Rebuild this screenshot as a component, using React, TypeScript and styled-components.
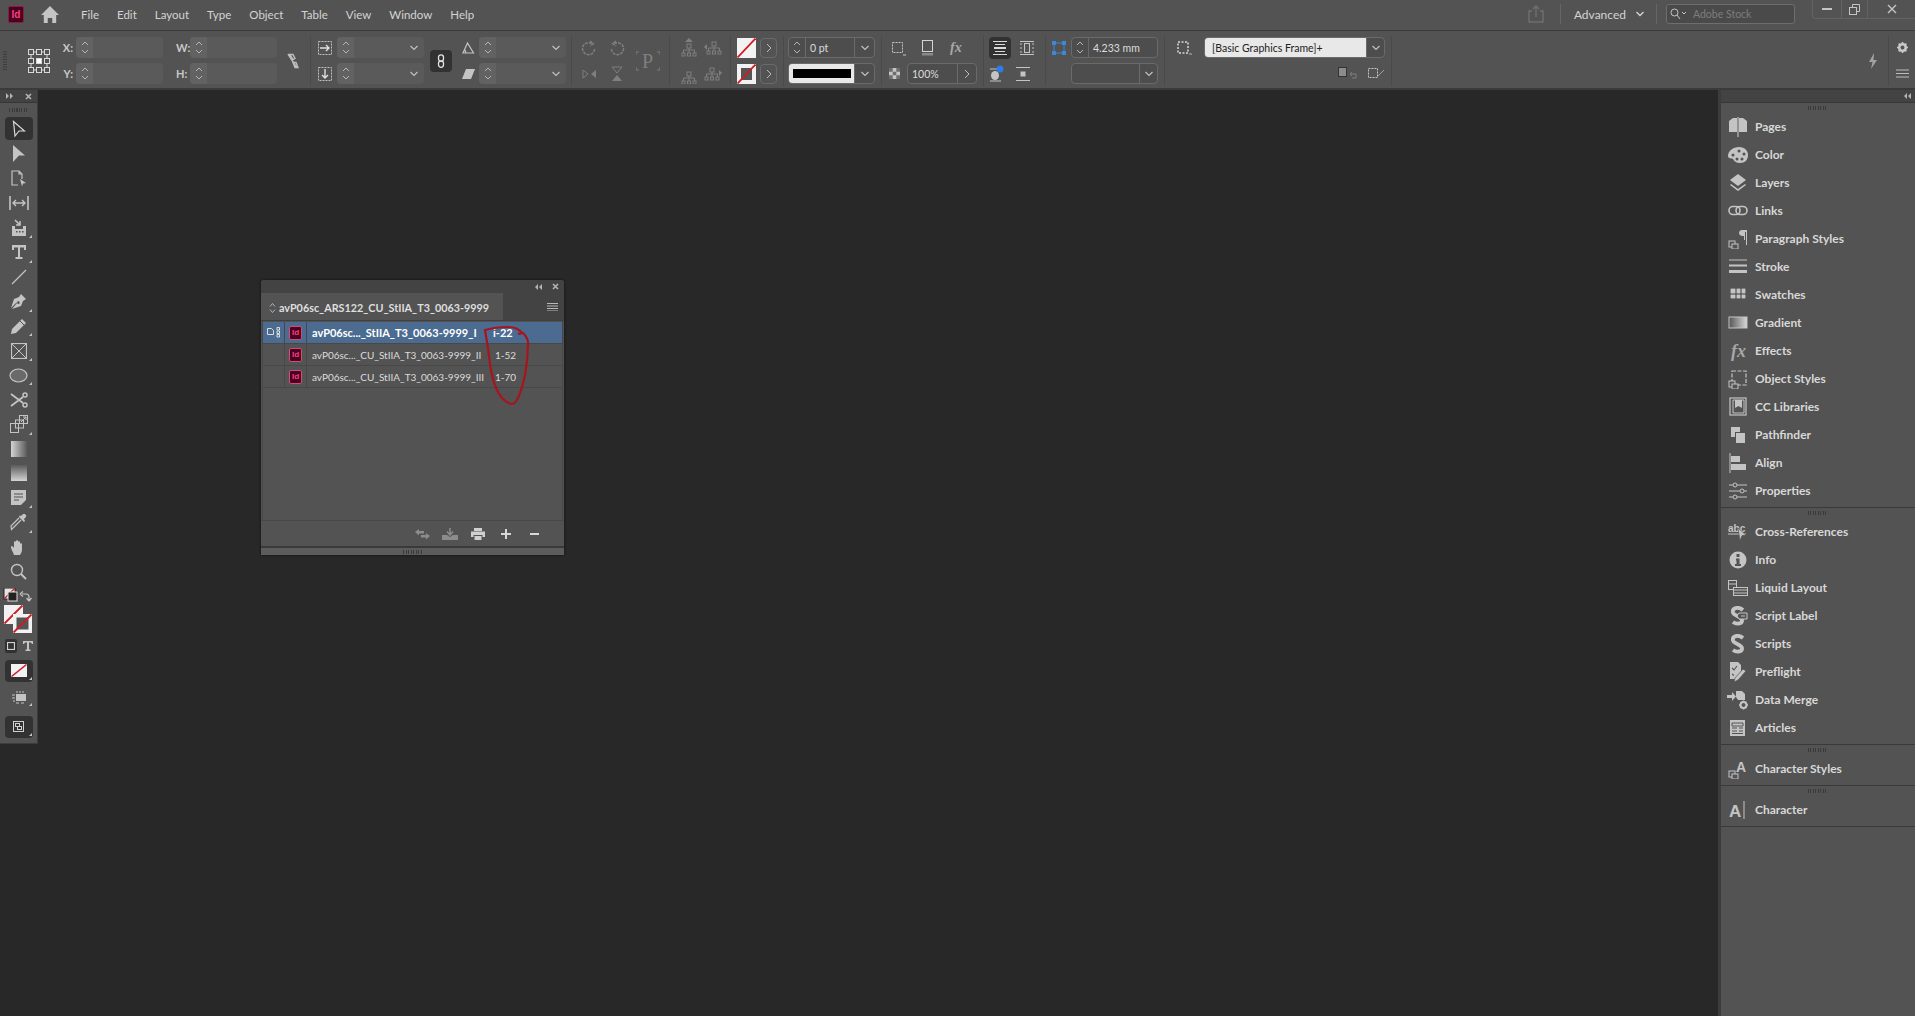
import React from "react";
import styled, { createGlobalStyle } from "styled-components";

const FONT = `"Lato", "Noto Sans", "Liberation Sans", sans-serif`;
const ICON = "#c4c4c4";
const DIM = "#7f7f7f";

const Global = createGlobalStyle`
  html, body { margin: 0; padding: 0; height: 100%; background: #282828; overflow: hidden; }
  #root { height: 100%; }
  * { box-sizing: border-box; }
`;

const Page = styled.div`
  display: flex;
  flex-direction: column;
  width: 1915px;
  height: 1016px;
  font-family: ${FONT};
  background: #282828;
  color: #d2d2d2;
`;

/* ---------- shared icon helper ---------- */
const Svg = styled.svg`
  display: block;
  flex: none;
`;

type GProps = { w?: number; h?: number; vb?: string; c?: string; children: React.ReactNode };
const G = ({ w = 20, h = 20, vb, c = ICON, children }: GProps) => (
  <Svg width={w} height={h} viewBox={vb || `0 0 ${w} ${h}`} fill={c} stroke="none">
    {children}
  </Svg>
);
const ln = (c: string, sw = 1) => ({ stroke: c, strokeWidth: sw, fill: "none" });

/* ---------- menu bar ---------- */
const MenuBar = styled.div`
  display: flex;
  align-items: center;
  height: 31px;
  flex: none;
  background: #535353;
  border-bottom: 1px solid #3c3c3c;
  padding: 0 0 2px 8px;
`;

const AppLogo = styled.div<{ $small?: boolean }>`
  width: ${(p) => (p.$small ? 13 : 16)}px;
  height: ${(p) => (p.$small ? 14 : 17)}px;
  flex: none;
  border-radius: 2px;
  background: #49021f;
  border: 1px solid ${(p) => (p.$small ? "#d9487a" : "#8a1d47")};
  color: #ff3f7f;
  font: 700 ${(p) => (p.$small ? 8 : 10)}px "Liberation Sans", sans-serif;
  display: flex;
  align-items: center;
  justify-content: center;
`;

const HomeSlot = styled.div`
  margin: 0 22px 0 17px;
`;

const Menu = styled.nav`
  display: flex;
  gap: 18px;
  font-size: 11.5px;
  color: #d4d4d4;
`;

const MenuRight = styled.div`
  margin-left: auto;
  display: flex;
  align-items: center;
  height: 100%;
`;

const VSep = styled.div<{ $m: string; $h?: number }>`
  width: 1px;
  height: ${(p) => p.$h ?? 20}px;
  background: #666;
  margin: ${(p) => p.$m};
`;

const Workspace = styled.span`
  font-size: 12px;
  color: #d4d4d4;
  margin-right: 9px;
`;

const StockSearch = styled.div`
  display: flex;
  align-items: center;
  gap: 6px;
  width: 129px;
  height: 20px;
  margin-right: 17px;
  padding-left: 3px;
  background: #4a4a4a;
  border: 1px solid #6e6e6e;
  border-radius: 3px;
  font-size: 10.5px;
  color: #7d7d7d;
`;

const WinButtons = styled.div`
  display: flex;
  align-self: flex-start;
  height: 19px;
  border: 1px solid #636363;
  border-top: 0;
  border-right: 0;
  border-radius: 0 0 0 4px;
`;

const WinButton = styled.div<{ $w: number; $line?: boolean }>`
  width: ${(p) => p.$w}px;
  display: flex;
  align-items: center;
  justify-content: center;
  border-right: ${(p) => (p.$line ? "1px solid #636363" : "0")};
`;

/* ---------- control bar ---------- */
const ControlBar = styled.div`
  display: flex;
  align-items: center;
  height: 59px;
  flex: none;
  padding-top: 2px;
  background: #535353;
  border-bottom: 2px solid #3a3a3a;
`;

const Group = styled.div<{ $w: number; $pad?: number; $gap?: number; $noLine?: boolean }>`
  display: flex;
  align-items: center;
  flex: none;
  width: ${(p) => p.$w}px;
  height: 50px;
  padding-left: ${(p) => p.$pad ?? 0}px;
  gap: ${(p) => p.$gap ?? 0}px;
  border-right: ${(p) => (p.$noLine ? "0" : "1px solid #4a4a4a")};
`;

const Col = styled.div<{ $w?: number }>`
  display: flex;
  flex-direction: column;
  gap: 5px;
  flex: none;
  ${(p) => (p.$w !== undefined ? `width: ${p.$w}px;` : "")}
`;

const Row = styled.div<{ $gap?: number; $end?: boolean; $center?: boolean }>`
  display: flex;
  align-items: center;
  height: 21px;
  gap: ${(p) => p.$gap ?? 0}px;
  justify-content: ${(p) => (p.$end ? "flex-end" : p.$center ? "center" : "flex-start")};
`;

const AxisLabel = styled.span<{ $w: number }>`
  width: ${(p) => p.$w}px;
  flex: none;
  font-size: 11px;
  font-weight: 700;
  color: #c8c8c8;
  text-align: right;
  padding-right: 3px;
`;

const Field = styled.div<{ $w: number; $outlined?: boolean }>`
  display: flex;
  align-items: center;
  flex: none;
  width: ${(p) => p.$w}px;
  height: 21px;
  border-radius: 4px;
  font-size: 10.5px;
  color: #dcdcdc;
  background: ${(p) => (p.$outlined ? "#4d4d4d" : "#5a5a5a")};
  border: ${(p) => (p.$outlined ? "1px solid #6a6a6a" : "0")};
`;

const FieldValue = styled.span`
  flex: 1;
  padding-left: 4px;
  white-space: nowrap;
`;

const FieldEnd = styled.div<{ $outlined?: boolean; $w?: number }>`
  margin-left: auto;
  width: ${(p) => p.$w ?? 20}px;
  height: 100%;
  flex: none;
  display: flex;
  align-items: center;
  justify-content: center;
  border-left: ${(p) => (p.$outlined ? "1px solid #6a6a6a" : "0")};
`;

const SpinBox = styled.div<{ $outlined?: boolean }>`
  width: 17px;
  height: 100%;
  flex: none;
  background: ${(p) => (p.$outlined ? "transparent" : "#626262")};
  border-radius: 4px 0 0 4px;
  border-right: ${(p) => (p.$outlined ? "1px solid #6a6a6a" : "0")};
  display: flex;
  align-items: center;
  justify-content: center;
`;

const DarkKey = styled.div<{ $w: number; $h: number }>`
  width: ${(p) => p.$w}px;
  height: ${(p) => p.$h}px;
  flex: none;
  background: #323232;
  border-radius: 4px;
  display: flex;
  align-items: center;
  justify-content: center;
`;

const ArrowKey = styled.div`
  width: 17px;
  height: 20px;
  border: 1px solid #6a6a6a;
  border-radius: 4px;
  display: flex;
  align-items: center;
  justify-content: center;
`;

const WhiteInput = styled.div`
  flex: 1;
  height: 100%;
  background: #e8e8e8;
  color: #222;
  font-size: 10.5px;
  display: flex;
  align-items: center;
  padding-left: 7px;
  white-space: nowrap;
  border-radius: 3px 0 0 3px;
`;

const WhiteStroke = styled.div`
  flex: 1;
  height: 100%;
  background: #e8e8e8;
  display: flex;
  align-items: center;
  padding: 0 3px 0 4px;
  border-radius: 3px 0 0 3px;
`;

const BlackBar = styled.div`
  flex: 1;
  height: 9px;
  background: #000;
`;

const Spring = styled.div`
  flex: 1;
`;

const Spin = ({ outlined }: { outlined?: boolean }) => (
  <SpinBox $outlined={outlined}>
    <G w={10} h={17}>
      <path d="M2 6l3-3 3 3M2 11l3 3 3-3" {...ln("#b5b5b5")} />
    </G>
  </SpinBox>
);

const Chev = ({ c = "#c0c0c0" }: { c?: string }) => (
  <G w={10} h={8}>
    <path d="M1.500 2l3.500 3.500L8.500 2" {...ln(c, 1.200)} />
  </G>
);

const NoneSwatch = ({ stroke }: { stroke?: boolean }) => (
  <G w={19} h={20}>
    <rect width="19" height="20" fill="#f2f2f2" />
    {stroke && <rect x="4" y="4" width="11" height="12" fill="#555" />}
    <path d="M0.500 19.500L18.500 0.500" {...ln("#d01c24", 1.800)} />
  </G>
);

const PlainField = () => (
  <Field $w={87}>
    <Spin />
  </Field>
);

const FieldDrop = () => (
  <Field $w={87}>
    <Spin />
    <FieldEnd>
      <Chev />
    </FieldEnd>
  </Field>
);

const hierarchy = (
  <>
    <rect x="6" y="6" width="4" height="4" {...ln(DIM)} />
    <path d="M8 10v2M2.500 15v-3h11v3M8 12v3" {...ln(DIM)} />
    <rect x="1" y="15" width="3" height="3" {...ln(DIM)} />
    <rect x="6.500" y="15" width="3" height="3" {...ln(DIM)} />
    <rect x="12" y="15" width="3" height="3" {...ln(DIM)} />
  </>
);

const Controls = () => (
  <ControlBar>
    <Group $w={58} $pad={3} $gap={20} $noLine>
      <G w={4} h={20}>
        <path d="M0 1h4M0 3.500h4M0 6h4M0 8.500h4M0 11h4M0 13.500h4M0 16h4M0 18.500h4" {...ln("#3d3d3d")} />
      </G>
      <G w={24} h={26} vb="0 0 22 26">
        {[0, 8, 16].map((x) =>
          [0, 9, 18].map((y) => (
            <rect key={`${x}-${y}`} x={x + 0.5} y={y + 1.5} width="5" height="5" fill={x === 8 && y === 9 ? "#fff" : "none"} stroke="#d8d8d8" />
          ))
        )}
        <path d="M6 4h2M14 4h2M3 7v3M3 16v3M19 7v3M19 16v3M6 22h2M14 22h2" {...ln("#d8d8d8")} />
      </G>
    </Group>

    <Group $w={253}>
      <Col>
        <Row><AxisLabel $w={18}>X:</AxisLabel><PlainField /></Row>
        <Row><AxisLabel $w={18}>Y:</AxisLabel><PlainField /></Row>
      </Col>
      <Col $w={13} />
      <Col>
        <Row><AxisLabel $w={14}>W:</AxisLabel><PlainField /></Row>
        <Row><AxisLabel $w={14}>H:</AxisLabel><PlainField /></Row>
      </Col>
      <Col $w={9} />
      <G w={14} h={18}>
        <path d="M4 2.500h3l2 4-2 1zM7 10.500l2 5h3l-2-5zM2 2l9 14" {...ln("#bdbdbd", 1.400)} />
      </G>
    </Group>

    <Group $w={261} $pad={7}>
      <Col $w={19}>
        <Row>
          <G w={14} h={14}>
            <rect x="0.500" y="0.500" width="13" height="13" {...ln("#c0c0c0")} strokeDasharray="2 1" />
            <path d="M2 7h9M8 4L11 7 8 10" {...ln("#e0e0e0", 1.400)} />
          </G>
        </Row>
        <Row>
          <G w={14} h={14}>
            <rect x="0.500" y="0.500" width="13" height="13" {...ln("#c0c0c0")} strokeDasharray="2 1" />
            <path d="M7 2v9M4 8l3 3 3-3" {...ln("#e0e0e0", 1.400)} />
          </G>
        </Row>
      </Col>
      <Col><FieldDrop /><FieldDrop /></Col>
      <Col $w={6} />
      <DarkKey $w={22} $h={22}>
        <G w={8} h={14}>
          <rect x="1.500" y="0.800" width="5" height="6.500" rx="2.500" {...ln("#e4e4e4", 1.300)} />
          <rect x="1.500" y="6.800" width="5" height="6.500" rx="2.500" {...ln("#e4e4e4", 1.300)} />
        </G>
      </DarkKey>
      <Col $w={10} />
      <Col $w={17}>
        <Row>
          <G w={13} h={12}>
            <path d="M1 11h10.500L5.500 1zM4 11l-1-3" {...ln("#c4c4c4", 1.200)} />
          </G>
        </Row>
        <Row>
          <G w={13} h={11}>
            <path d="M4 1h9l-4 10H0z" fill="#c4c4c4" />
          </G>
        </Row>
      </Col>
      <Col><FieldDrop /><FieldDrop /></Col>
    </Group>

    <Group $w={98} $pad={8}>
      <Col $w={18}>
        <Row $center>
          <G w={16} h={16}><path d="M13.500 9a6 6 0 1 1-3-5.500M9 1l3.500 2.500L9 6" {...ln(DIM, 1.500)} strokeDasharray="3 1" /></G>
        </Row>
        <Row $center>
          <G w={15} h={14}><path d="M1 3l5 4-5 4z" {...ln(DIM)} /><path d="M14 3L9 7l5 4z" fill={DIM} /></G>
        </Row>
      </Col>
      <Col $w={10} />
      <Col $w={17}>
        <Row $center>
          <G w={16} h={16}><path d="M2.500 9a6 6 0 1 0 3-5.500M7 1L3.500 3.500 7 6" {...ln(DIM, 1.500)} strokeDasharray="3 1" /></G>
        </Row>
        <Row $center>
          <G w={14} h={16}><path d="M2 1h10L7 7z" {...ln(DIM)} /><path d="M2 15h10L7 9z" fill={DIM} /></G>
        </Row>
      </Col>
      <Col $w={11} />
      <G w={24} h={34}>
        <text x="6" y="24" fontFamily="Liberation Serif" fontSize="20" fill={DIM}>P</text>
        <path d="M0 11V8h3M21 8h3v3M24 23v3h-3M3 26H0v-3" {...ln(DIM)} />
      </G>
    </Group>

    <Group $w={61} $pad={11}>
      <Col $w={23}>
        <Row><G w={16} h={20}><path d="M8 0l4 4H4z" fill={DIM} />{hierarchy}</G></Row>
        <Row><G w={16} h={20} vb="0 -2 16 20"><path d="M8 22l4-4H4z" fill={DIM} />{hierarchy}</G></Row>
      </Col>
      <Col $w={20}>
        <Row><G w={18} h={15} vb="-2 4 18 15"><path d="M-2 11l3-3v6z" fill={DIM} />{hierarchy}</G></Row>
        <Row><G w={18} h={15} vb="0 4 18 15">{hierarchy}<path d="M18 11l-3-3v6z" fill={DIM} /></G></Row>
      </Col>
    </Group>

    <Group $w={53} $pad={6} $gap={4}>
      <Col><Row><NoneSwatch /></Row><Row><NoneSwatch stroke /></Row></Col>
      <Col>
        <Row><ArrowKey><G w={6} h={10}><path d="M1 1l4 4-4 4" {...ln("#bbb")} /></G></ArrowKey></Row>
        <Row><ArrowKey><G w={6} h={10}><path d="M1 1l4 4-4 4" {...ln("#bbb")} /></G></ArrowKey></Row>
      </Col>
    </Group>

    <Group $w={98} $pad={4}>
      <Col>
        <Field $w={87} $outlined>
          <Spin outlined />
          <FieldValue>0 pt</FieldValue>
          <FieldEnd $outlined><Chev /></FieldEnd>
        </Field>
        <Field $w={87} $outlined>
          <WhiteStroke><BlackBar /></WhiteStroke>
          <FieldEnd $outlined><Chev /></FieldEnd>
        </Field>
      </Col>
    </Group>

    <Group $w={102} $pad={7}>
      <Col>
        <Row>
          <Col $w={2} />
          <G w={15} h={16}>
            <rect x="1.500" y="2.500" width="10" height="10" {...ln("#c4c4c4")} strokeDasharray="2 1" />
            <path d="M12 15h3" {...ln("#c4c4c4")} />
          </G>
          <Col $w={15} />
          <G w={13} h={17}>
            <rect x="1.500" y="1.500" width="10" height="11" {...ln("#d4d4d4")} />
            <path d="M1 14h11v2.500H1z" fill="#8a8a8a" />
          </G>
          <Col $w={16} />
          <G w={16} h={16}>
            <text x="0" y="12" fontFamily="Liberation Serif" fontStyle="italic" fontWeight="700" fontSize="14" fill="#a8a8a8">fx</text>
          </G>
        </Row>
        <Row>
          <G w={11} h={11}>
            <rect width="11" height="11" fill="#c4c4c4" />
            <path d="M0 0h3.700v3.700H0zM7.300 0H11v3.700H7.300zM3.700 3.700h3.600v3.600H3.700zM0 7.300h3.700V11H0zM7.300 7.300H11V11H7.300z" fill="#6d6d6d" />
          </G>
          <Col $w={7} />
          <Field $w={70} $outlined>
            <FieldValue>100%</FieldValue>
            <FieldEnd $outlined $w={19}><G w={6} h={10}><path d="M1 1l4 4-4 4" {...ln("#bbb")} /></G></FieldEnd>
          </Field>
        </Row>
      </Col>
    </Group>

    <Group $w={62} $pad={5}>
      <Col>
        <Row $gap={9}>
          <DarkKey $w={22} $h={22}>
            <G w={14} h={14}>
              <path d="M0 .5h14M0 13.500h14M2 3.500h10M2 10.500h10" {...ln("#d8d8d8")} />
              <path d="M1 7h12" {...ln("#d8d8d8", 2)} />
            </G>
          </DarkKey>
          <G w={14} h={14}>
            <path d="M0 .5h14M0 13.500h14" {...ln("#c4c4c4")} />
            <rect x="4.500" y="2.500" width="5" height="9" {...ln("#c4c4c4")} />
            <path d="M0 3h2M0 7h2M0 11h2M12 3h2M12 7h2M12 11h2" {...ln("#c4c4c4")} />
          </G>
        </Row>
        <Row $gap={11}>
          <G w={16} h={18} vb="0 -4 16 18">
            <path d="M1 0h11M1 12h11" {...ln("#c4c4c4")} />
            <ellipse cx="6" cy="6.500" rx="4" ry="4.500" fill="#c4c4c4" />
            <circle cx="11" cy="0" r="3.500" fill="#2f7be8" />
          </G>
          <G w={14} h={14}>
            <path d="M0 .5h14M0 13.500h14" {...ln("#c4c4c4")} />
            <rect x="4.500" y="4.500" width="5" height="5" fill="#c4c4c4" />
          </G>
        </Row>
      </Col>
    </Group>

    <Group $w={119} $pad={6} $gap={5}>
      <Col>
        <Row>
          <G w={14} h={14}>
            <path d="M0 0h4v4H0zM10 0h4v4h-4zM0 10h4v4H0zM10 10h4v4h-4z" fill="#3d87d6" />
            <path d="M4 2h6M4 12h6M2 4v6M12 4v6" {...ln("#3d87d6")} />
          </G>
        </Row>
        <Row />
      </Col>
      <Col>
        <Field $w={87} $outlined>
          <Spin outlined />
          <FieldValue>4.233 mm</FieldValue>
        </Field>
        <Field $w={87} $outlined>
          <FieldEnd $outlined $w={18}><Chev /></FieldEnd>
        </Field>
      </Col>
    </Group>

    <Group $w={227} $pad={12} $gap={12}>
      <Col>
        <Row>
          <G w={15} h={14}>
            <rect x="1" y="1" width="10" height="11" {...ln("#b8b8b8", 2)} strokeDasharray="2 1.500" />
            <path d="M12 13h3" {...ln("#b8b8b8")} />
          </G>
        </Row>
        <Row />
      </Col>
      <Col $w={181}>
        <Field $w={181} $outlined>
          <WhiteInput>[Basic Graphics Frame]+</WhiteInput>
          <FieldEnd $outlined $w={18}><Chev /></FieldEnd>
        </Field>
        <Row $end $gap={10}>
          <G w={20} h={13}>
            <rect x="0.500" y="0.500" width="8" height="9" fill="#8c8c8c" stroke="#333" />
            <path d="M13 7h5v4h-4M14 5l-2 2 2 2" {...ln(DIM)} />
          </G>
          <G w={17} h={13}>
            <rect x="0.500" y="1.500" width="9" height="9" {...ln("#c4c4c4")} strokeDasharray="2 1" />
            <path d="M10 9l6-6" {...ln("#a0a0a0")} />
          </G>
        </Row>
      </Col>
    </Group>

    <Spring />

    <Group $w={25} $pad={4}>
      <G w={10} h={18}>
        <path d="M6 1L1 10h3.500L3 17l6-9H5.500z" fill="#a2a2a2" />
      </G>
    </Group>
    <Col $w={26}>
      <Row $center>
        <G w={11} h={11} vb="0 0 10 10">
          <circle cx="5" cy="5" r="3" {...ln("#c8c8c8", 2.400)} />
          <path d="M5 0v2M5 8v2M0 5h2M8 5h2M1.500 1.500l1.500 1.500M7 7l1.500 1.500M8.500 1.500L7 3M3 7L1.500 8.500" {...ln("#c8c8c8", 1.500)} />
        </G>
      </Row>
      <Row $center>
        <G w={13} h={9}>
          <path d="M0 1h13M0 4.500h13M0 8h13" {...ln("#bdbdbd")} />
        </G>
      </Row>
    </Col>
  </ControlBar>
);

/* ---------- left tools ---------- */
const Body = styled.div`
  display: flex;
  flex: 1;
  min-height: 0;
`;

const ToolColumn = styled.aside`
  width: 38px;
  height: 654px;
  flex: none;
  display: flex;
  flex-direction: column;
  align-items: center;
  background: #535353;
  border-right: 1px solid #3c3c3c;
  border-bottom: 1px solid #3c3c3c;
`;

const StripHead = styled.div<{ $right?: boolean }>`
  width: 100%;
  height: 13px;
  flex: none;
  background: #434343;
  border-bottom: 1px solid #363636;
  display: flex;
  align-items: center;
  justify-content: ${(p) => (p.$right ? "flex-end" : "space-between")};
  padding: 0 ${(p) => (p.$right ? 4 : 5)}px 0 6px;
`;

const Grip = styled.div<{ $h?: number }>`
  width: 20px;
  height: ${(p) => p.$h ?? 14}px;
  flex: none;
  align-self: center;
  background: repeating-linear-gradient(90deg, #3a3a3a 0 1px, transparent 1px 2.500px) center / 100% 4px no-repeat;
`;

const Tool = styled.div<{ $active?: boolean; $corner?: boolean; $h?: number; $mt?: number }>`
  position: relative;
  width: 28px;
  height: ${(p) => p.$h ?? 24.55}px;
  margin-top: ${(p) => p.$mt ?? 0}px;
  flex: none;
  display: flex;
  align-items: center;
  justify-content: center;
  border-radius: 4px;
  background: ${(p) => (p.$active ? "#323232" : "transparent")};

  &::after {
    content: "";
    display: ${(p) => (p.$corner ? "block" : "none")};
    position: absolute;
    right: 1px;
    bottom: 2px;
    border-left: 3px solid transparent;
    border-bottom: 3px solid #c4c4c4;
  }
`;

const ModeRow = styled.div`
  display: flex;
  align-items: center;
  gap: 6px;
  height: 15px;
  margin: 1px 0 6px;
  width: 28px;
`;

const ModeKey = styled.div`
  width: 14px;
  height: 14px;
  background: #323232;
  border-radius: 2px;
  display: flex;
  align-items: center;
  justify-content: center;
`;

const tools: { icon: React.ReactNode; corner?: boolean; active?: boolean }[] = [
  { active: true, icon: <G w={14} h={18}><path d="M1.500 1.500L12.500 11H7L3 16z" {...ln("#d8d8d8", 1.200)} /></G> },
  { icon: <G w={14} h={18}><path d="M1 0L13 10.500H7L1 17z" /></G> },
  { icon: <G w={16} h={18}><path d="M7 15H1V1h7l3 3v5M8 1v3h3" {...ln(ICON, 1.200)} /><path d="M9 9l6 4-3 .5-1 3z" /></G> },
  { icon: <G w={20} h={16}><path d="M1 1v14M19 1v14" {...ln(ICON, 1.600)} /><path d="M4 8h12M7 5L4 8l3 3M13 5l3 3-3 3" {...ln(ICON, 1.400)} /></G> },
  { corner: true, icon: <G w={16} h={18}><path d="M1 7h3v3h8V7h3v10H1z" /><path d="M4 1l5 5M9 2v4H5" {...ln(ICON, 1.500)} /><path d="M5 12h1.500v1.500H5zM8 12h1.500v1.500H8zM11 12h1.500v1.500H11z" fill="#535353" /></G> },
  { corner: true, icon: <G w={16} h={16}><path d="M1 1h14v5h-2V3.500H9V13h2.500v2h-7v-2H7V3.500H3V6H1z" /></G> },
  { icon: <G w={16} h={16}><path d="M1 15L15 1" {...ln(ICON, 1.200)} /></G> },
  { corner: true, icon: <G w={17} h={17}><path d="M11 1l5 5-3 2-2 5-9 3 5-6 .8.8a1.300 1.300 0 1 0-.6-.6L6.500 9.500 1 15 4 6l5-2z" /></G> },
  { corner: true, icon: <G w={17} h={17}><path d="M12 1l4 4L6 15l-5 1 1-5z" /><path d="M10 3l4 4" {...ln("#535353")} /></G> },
  { corner: true, icon: <G w={16} h={16}><rect x=".5" y=".5" width="15" height="15" {...ln(ICON, 1.200)} /><path d="M1 1l14 14M15 1L1 15" {...ln(ICON)} /></G> },
  { corner: true, icon: <G w={19} h={15}><ellipse cx="9.500" cy="7.500" rx="8.500" ry="6.500" fill="#6a6a6a" stroke={ICON} strokeWidth="1.200" /></G> },
  { icon: <G w={18} h={16}><circle cx="15" cy="3" r="2" {...ln(ICON, 1.500)} /><circle cx="15" cy="13" r="2" {...ln(ICON, 1.500)} /><path d="M1 2l12 9M1 14l12-9" {...ln(ICON, 1.800)} /></G> },
  { corner: true, icon: <G w={18} h={18}><rect x=".5" y="8.500" width="8" height="9" {...ln(ICON)} /><rect x="5.500" y="5" width="8" height="8" {...ln(ICON)} /><rect x="9.500" y=".5" width="8" height="8" {...ln(ICON)} /><path d="M11 7l5-5M13 2h3v3" {...ln(ICON)} /></G> },
  { icon: <G w={16} h={16} vb="0 0 16 16"><defs><linearGradient id="tg1"><stop offset="0" stopColor="#d4d4d4" /><stop offset="1" stopColor="#5a5a5a" /></linearGradient></defs><rect width="16" height="16" fill="url(#tg1)" /></G> },
  { icon: <G w={16} h={16}><defs><linearGradient id="tg2" x1="0" y1="0" x2="0" y2="1"><stop offset="0" stopColor="#5a5a5a" /><stop offset="1" stopColor="#d4d4d4" /></linearGradient></defs><rect width="16" height="16" fill="url(#tg2)" /></G> },
  { corner: true, icon: <G w={15} h={15}><path d="M0 0h15v10l-5 5H0z" /><path d="M3 4h9M3 7h9M3 10h5" {...ln("#535353", 1.200)} /></G> },
  { corner: true, icon: <G w={17} h={17}><path d="M11 6l-8 8-1.500 1.500L1 12l8-8" {...ln(ICON, 1.200)} /><path d="M9 3l5 5 1-1-1-2 1.500-1.500a1.500 1.500 0 0 0-3-3L11 2 9.500 1.500z" /></G> },
  { icon: <G w={16} h={17}><path d="M3 16c-1-3-3-6-3-8s2-1 3 1V3c0-1 2-1 2 0V2c0-1 2-1 2 0v1c0-1 2-1 2 0v2c0-1 2-1 2 0v6c0 2-1 3-2 5z" /></G> },
  { icon: <G w={17} h={17}><circle cx="7" cy="7" r="5.500" {...ln(ICON, 1.400)} /><path d="M11 11l5 5" {...ln(ICON, 2)} /></G> },
];

const ToolStrip = () => (
  <ToolColumn>
    <StripHead>
      <G w={7} h={6}><path d="M0 0l3 3-3 3zM4 0l3 3-3 3z" fill="#b4b4b4" /></G>
      <G w={7} h={7}><path d="M1 1l5 5M6 1L1 6" {...ln("#b4b4b4", 1.600)} /></G>
    </StripHead>
    <Grip />
    {tools.map((t, i) => (
      <Tool key={i} $active={t.active} $corner={t.corner} $h={i === 0 ? 23 : undefined} $mt={i === 1 ? 2 : 0}>
        {t.icon}
      </Tool>
    ))}
    <Tool $h={50} $mt={4}>
      <G w={32} h={50}>
        <rect x="1" y="0" width="11" height="11" fill="#e4e4e4" stroke="#222" />
        <path d="M1.500 10.500l10-10" {...ln("#d01c24", 1.200)} />
        <rect x="5" y="4" width="9" height="9" fill="#222" stroke="#ddd" />
        <path d="M19 6h4a3 3 0 0 1 3 3v3M17 6l3-2.500M17 6l3 2.500M26 13l-2.500-3M26 13l2.500-3" {...ln("#c4c4c4", 1.200)} />
        <rect x="1" y="17" width="19" height="19" fill="#f2f2f2" />
        <path d="M1.500 35.500l18-18" {...ln("#d01c24", 1.800)} />
        <rect x="10" y="26" width="19" height="19" fill="#f2f2f2" />
        <rect x="13.500" y="29.500" width="12" height="12" fill="#555" />
        <path d="M10.500 44.500l18-18" {...ln("#d01c24", 1.800)} />
      </G>
    </Tool>
    <ModeRow>
      <ModeKey>
        <G w={8} h={8}><rect x=".5" y=".5" width="7" height="7" {...ln("#d0d0d0", 1.200)} /></G>
      </ModeKey>
      <G w={10} h={10}>
        <path d="M0 0h10v3H9L8 1.500H6V8.500h1.500V10h-5V8.500H4V1.500H2L1 3H0z" />
      </G>
    </ModeRow>
    <Tool $active $corner $h={22}>
      <G w={16} h={13}>
        <rect width="16" height="13" fill="#f2f2f2" />
        <path d="M.5 12.500l15-12" {...ln("#d01c24", 1.500)} />
      </G>
    </Tool>
    <Tool $corner $h={22} $mt={4}>
      <G w={14} h={14}>
        <rect x="4" y="4" width="10" height="7" />
        <path d="M0 5h3M0 8h3M1 11h2M4 13h3M9 13h3M5 1v2M8 1v2M11 1v2" {...ln(ICON)} />
      </G>
    </Tool>
    <Tool $active $corner $h={22} $mt={8}>
      <G w={11} h={11}>
        <rect x=".5" y=".5" width="10" height="10" {...ln("#d0d0d0")} />
        <rect x="2.500" y="2.500" width="4" height="3" {...ln("#d0d0d0")} />
        <rect x="4.500" y="5.500" width="4" height="3" {...ln("#d0d0d0")} />
      </G>
    </Tool>
  </ToolColumn>
);

/* ---------- canvas and floating book panel ---------- */
const Canvas = styled.main`
  position: relative;
  flex: 1;
  background: #282828;
`;

const BookPanel = styled.section`
  position: absolute;
  left: 223px;
  top: 190px;
  width: 303px;
  height: 275px;
  display: flex;
  flex-direction: column;
  background: #535353;
  border-radius: 3px 3px 0 0;
  box-shadow: 0 0 3px rgba(0, 0, 0, 0.6);
`;

const PanelHead = styled.div`
  height: 13px;
  flex: none;
  background: #434343;
  display: flex;
  align-items: center;
  justify-content: flex-end;
  gap: 10px;
  padding-right: 5px;
  border-radius: 3px 3px 0 0;
`;

const TabRow = styled.div`
  height: 28px;
  flex: none;
  display: flex;
  background: #434343;
  justify-content: space-between;
  border-bottom: 1px solid #3f3f3f;
`;

const Tab = styled.div`
  width: 242px;
  display: flex;
  align-items: center;
  gap: 3px;
  padding: 2px 0 0 8px;
  background: #535353;
  font-size: 10.8px;
  font-weight: 700;
  color: #dedede;
  white-space: nowrap;
`;

const TabMenu = styled.div`
  display: flex;
  align-items: center;
  padding-right: 6px;
`;

const BookList = styled.div`
  flex: 1;
  margin: 0 1px;
  padding-top: 1px;
  border-left: 1px solid #484848;
  border-right: 1px solid #484848;
`;

const BookRow = styled.div<{ $selected?: boolean }>`
  display: grid;
  grid-template-columns: 22px 22px 188px 1fr;
  height: 22px;
  align-items: center;
  font-size: ${(p) => (p.$selected ? 11 : 10)}px;
  font-weight: ${(p) => (p.$selected ? 700 : 400)};
  color: ${(p) => (p.$selected ? "#fff" : "#dcdcdc")};
  background: ${(p) => (p.$selected ? "#4b6b90" : "transparent")};
  border-bottom: 1px solid #484848;
`;

const RowMark = styled.div`
  height: 100%;
  border-right: 1px solid #484848;
  display: flex;
  align-items: center;
  justify-content: center;
`;

const RowDoc = styled(RowMark)``;

const RowName = styled.div`
  padding-left: 5px;
  white-space: nowrap;
  overflow: hidden;
`;

const RowPages = styled.div<{ $selected?: boolean }>`
  margin-left: ${(p) => (p.$selected ? -2 : 0)}px;
`;

const PanelFoot = styled.div`
  height: 26px;
  flex: none;
  display: flex;
  align-items: center;
  justify-content: flex-end;
  padding-right: 16px;
  border-top: 1px solid #484848;
`;

const FootSlot = styled.div`
  width: 28px;
  display: flex;
  justify-content: center;
`;

const PanelBase = styled.div`
  height: 9px;
  flex: none;
  background: #5c5c5c;
  border-top: 2px solid #3a3a3a;
  display: flex;
  justify-content: center;
`;

const Scribble = styled.svg`
  position: absolute;
  left: 0;
  top: 0;
  pointer-events: none;
`;

const books = [
  { name: "avP06sc..._StIIA_T3_0063-9999_I", pages: "i-22", selected: true },
  { name: "avP06sc..._CU_StIIA_T3_0063-9999_II", pages: "1-52" },
  { name: "avP06sc..._CU_StIIA_T3_0063-9999_III", pages: "1-70" },
];

const BookWindow = () => (
  <BookPanel>
    <PanelHead>
      <G w={7} h={6}><path d="M7 0L4 3l3 3zM3 0L0 3l3 3z" fill="#b4b4b4" /></G>
      <G w={7} h={7}><path d="M1 1l5 5M6 1L1 6" {...ln("#b4b4b4", 1.600)} /></G>
    </PanelHead>
    <TabRow>
      <Tab>
        <G w={7} h={12}><path d="M1 4.500l2.500-3 2.500 3M1 7.500l2.500 3 2.500-3" {...ln("#b4b4b4")} /></G>
        avP06sc_ARS122_CU_StIIA_T3_0063-9999
      </Tab>
      <TabMenu>
        <G w={11} h={8}><path d="M0 .5h11M0 3h11M0 5.500h11M0 8h11" {...ln("#b8b8b8")} /></G>
      </TabMenu>
    </TabRow>
    <BookList>
      {books.map((b) => (
        <BookRow key={b.pages} $selected={b.selected}>
          <RowMark>
            {b.selected && (
              <G w={13} h={11}>
                <path d="M.5 1.500h4l2 2v4h-6z" {...ln("#dcdcdc")} />
                <path d="M10 .5h2.500v2.500H10zM10 4h2.500v2.500H10zM10 7.500h2.500V10H10z" {...ln("#dcdcdc")} />
              </G>
            )}
          </RowMark>
          <RowDoc><AppLogo $small>Id</AppLogo></RowDoc>
          <RowName>{b.name}</RowName>
          <RowPages $selected={b.selected}>{b.pages}</RowPages>
        </BookRow>
      ))}
    </BookList>
    <PanelFoot>
      <FootSlot>
        <G w={15} h={12}>
          <path d="M0 4l4-3v2h5v2.500H4V7.500zM15 8l-4-3v2H6v2.500h5v2z" fill="#8c8c8c" />
        </G>
      </FootSlot>
      <FootSlot>
        <G w={16} h={12}>
          <path d="M0 7h5l3 2 3-2h5v5H0z" fill="#8c8c8c" />
          <path d="M8 0v6M5 3.500L8 7l3-3.500" {...ln("#8c8c8c", 1.500)} />
        </G>
      </FootSlot>
      <FootSlot>
        <G w={14} h={12}>
          <path d="M3 0h8v3H3zM0 3.500h14V9h-2.500V7h-9v2H0zM3.500 8h7v4h-7z" fill="#d0d0d0" />
        </G>
      </FootSlot>
      <FootSlot><G w={12} h={12}><path d="M6 1v10M1 6h10" {...ln("#d8d8d8", 2)} /></G></FootSlot>
      <FootSlot><G w={11} h={12}><path d="M1 6h9" {...ln("#d8d8d8", 2)} /></G></FootSlot>
    </PanelFoot>
    <PanelBase><Grip $h={6} /></PanelBase>
    <Scribble width="303" height="275" viewBox="0 0 303 275">
      <path
        d="M224 50c7-2 15-3 23-3 6 0 11 2 14 6l-4 1 5-1c3 3 5 6 5 10 0 11-1 21-3 32-2 9-4 17-7 23-2 4-4 6-6 6-3 0-7-3-10-6-5-6-8-14-10-23-2-9-3-18-4-27-1-6-2-12-3-18z"
        fill="none"
        stroke="#a8141e"
        strokeWidth="2.200"
      />
    </Scribble>
  </BookPanel>
);

/* ---------- right dock ---------- */
const Dock = styled.aside`
  width: 197px;
  flex: none;
  display: flex;
  flex-direction: column;
  background: #535353;
  border-left: 3px solid #3c3c3c;
`;

const DockSection = styled.div`
  flex: none;
  padding-bottom: 2px;
  border-bottom: 1px solid #3a3a3a;
`;

const DockGrip = styled.div`
  display: flex;
  justify-content: center;
  height: 9px;
  align-items: center;
  margin-bottom: 1px;
`;

const DockRow = styled.div`
  display: flex;
  align-items: center;
  height: 28px;
  padding: 0 0 1px 5px;
  gap: 5px;
  font-size: 12px;
  font-weight: 700;
  color: #d8d8d8;
  white-space: nowrap;
`;

const DockIcon = styled.div`
  width: 24px;
  flex: none;
  display: flex;
  justify-content: center;
`;

const styledBoxes = (
  <>
    <rect x="1" y="12" width="6" height="6" fill="#535353" stroke={ICON} />
    <rect x="4" y="15" width="6" height="5" fill="#535353" stroke={ICON} />
  </>
);

const scriptS = <path d="M15 4C10 0 4 2 5 6.500c1 3.500 8 3.500 9 7.500 .5 3.500-5 5-9 2" {...ln(ICON, 3.800)} />;

const panelsA: { label: string; icon: React.ReactNode }[] = [
  { label: "Pages", icon: <G><path d="M1 4l4-3h4v14H1zM19 4l-4-3h-4v14h8z" /><path d="M10 0v20" {...ln("#d4d4d4")} /></G> },
  { label: "Color", icon: <G><path d="M11 2C5 2 0 6 0 11c0 3 4 2 5 3 1 2 3 4 7 4 5 0 8-3 8-8 0-4-3-8-9-8z" /><circle cx="5" cy="10" r="1.500" fill="#535353" /><circle cx="9" cy="14" r="1.500" fill="#535353" /><circle cx="14" cy="14" r="1.500" fill="#535353" /><circle cx="16" cy="9" r="1.500" fill="#535353" /><circle cx="11" cy="6" r="1.500" fill="#535353" /></G> },
  { label: "Layers", icon: <G><path d="M10 1l8 6-8 6-8-6z" /><path d="M3 11l7 5 7-5 1 1-8 6-8-6z" /></G> },
  { label: "Links", icon: <G><rect x="1" y="5.500" width="11" height="8" rx="4" {...ln(ICON, 1.600)} /><rect x="8" y="5.500" width="11" height="8" rx="4" {...ln(ICON, 1.600)} /></G> },
  { label: "Paragraph Styles", icon: <G><path d="M17 1h2v15h-1V3h-1v8h-1V7h-1C12 7 11 5.500 11 4s1-3 3-3z" />{styledBoxes}</G> },
  { label: "Stroke", icon: <G><path d="M1 3h18" {...ln(ICON, 1)} /><path d="M1 8.500h18" {...ln(ICON, 2)} /><path d="M1 14.500h18" {...ln(ICON, 3)} /></G> },
  { label: "Swatches", icon: <G><rect x="2" y="3" width="16" height="11" fill="#3f3f3f" /><path d="M2.500 3.500h5v5h-5zM8.500 3.500h4v5h-4zM13.500 3.500h4v5h-4zM2.500 9.500h5v4h-5zM8.500 9.500h4v4h-4zM13.500 9.500h4v4h-4z" /></G> },
  { label: "Gradient", icon: <G><defs><linearGradient id="dg"><stop offset="0" stopColor="#555" /><stop offset="1" stopColor="#d8d8d8" /></linearGradient></defs><rect x="1" y="4" width="18" height="11" fill="url(#dg)" stroke={ICON} /></G> },
  { label: "Effects", icon: <G><text x="3" y="16" fontFamily="Liberation Serif" fontStyle="italic" fontSize="18" fill="#a8a8a8">fx</text></G> },
  { label: "Object Styles", icon: <G><rect x="4" y="2" width="14" height="14" {...ln(ICON, 1.200)} strokeDasharray="4 1.500" />{styledBoxes}</G> },
  { label: "CC Libraries", icon: <G><rect x="2" y="1" width="16" height="17" {...ln(ICON, 1.200)} /><path d="M5 3h11v13H5z" {...ln(ICON)} /><path d="M7 3h7v8l-3.500-2L7 11z" /></G> },
  { label: "Pathfinder", icon: <G><path d="M3 2h9v5h-5v5H3z" /><rect x="8" y="8" width="9" height="10" /></G> },
  { label: "Align", icon: <G><path d="M2 0v20" {...ln(ICON)} /><rect x="3" y="3" width="9" height="6" /><rect x="3" y="11" width="15" height="6" /></G> },
  { label: "Properties", icon: <G><path d="M1 4h4M9 4h10M1 10h11M16 10h3M1 16h4M9 16h10" {...ln(ICON)} /><circle cx="7" cy="4" r="2" {...ln(ICON)} /><circle cx="14" cy="10" r="2" {...ln(ICON)} /><circle cx="7" cy="16" r="2" {...ln(ICON)} /></G> },
];

const panelsB: { label: string; icon: React.ReactNode }[] = [
  { label: "Cross-References", icon: <G><text x="0" y="10" fontFamily="Liberation Sans" fontSize="10" fill={ICON}>abc</text><path d="M0 12h18" {...ln(ICON)} /><path d="M10 6l8 7-4 .5-2 5z" stroke="#535353" strokeWidth=".6" /></G> },
  { label: "Info", icon: <G><circle cx="10" cy="10" r="8.500" /><path d="M8.500 4h3v3h-3zM8 8.500h3.500V14H13v2H7v-2h1.500v-3.500H8z" fill="#535353" /></G> },
  { label: "Liquid Layout", icon: <G><rect x=".5" y="2.500" width="8" height="9" {...ln(ICON)} /><path d="M1 6h7" {...ln(ICON)} /><rect x="5.500" y="9.500" width="14" height="8" fill="#535353" stroke={ICON} /><path d="M6 12h13M6 15h13" {...ln(ICON)} /></G> },
  { label: "Script Label", icon: <G>{scriptS}<path d="M11 7h8v6h-8l-2-3z" fill="#535353" stroke={ICON} /><path d="M13 10h4" {...ln(ICON)} /></G> },
  { label: "Scripts", icon: <G>{scriptS}</G> },
  { label: "Preflight", icon: <G><path d="M2 0h8l3 3v7l-4 7H2z" /><path d="M4 6l2 2 3-4M4 12l2 1.500" {...ln("#535353", 1.100)} /><path d="M15 7l3 2-8 9-4 2 1-4z" stroke="#535353" strokeWidth=".7" /></G> },
  { label: "Data Merge", icon: <G w={22} h={22}><path d="M0 6h5V3l4 4.500L5 12V9H0z" /><path d="M9 2h6l3 3v6h-7l-2-3z" /><circle cx="16.500" cy="16" r="3" {...ln(ICON, 2)} /><path d="M16.500 11.500v2M16.500 18.500v2M12 16h2M19 16h2M13.500 13l1.500 1.500M18 17.500l1.500 1.500M19.500 13L18 14.500M15 17.500L13.500 19" {...ln(ICON, 1.500)} /></G> },
  { label: "Articles", icon: <G><rect x="2" y="2" width="15" height="16" /><path d="M4 5h11v3H4zM4 10h5M4 13h5M4 15.500h11M11 10h4M11 13h4" {...ln("#535353", 1)} /></G> },
];

const DockPanels = () => (
  <Dock>
    <StripHead $right>
      <G w={7} h={6}><path d="M7 0L4 3l3 3zM3 0L0 3l3 3z" fill="#b4b4b4" /></G>
    </StripHead>
    <DockSection>
      <DockGrip><Grip $h={6} /></DockGrip>
      {panelsA.map((p) => (
        <DockRow key={p.label}><DockIcon>{p.icon}</DockIcon>{p.label}</DockRow>
      ))}
    </DockSection>
    <DockSection>
      <DockGrip><Grip $h={6} /></DockGrip>
      {panelsB.map((p) => (
        <DockRow key={p.label}><DockIcon>{p.icon}</DockIcon>{p.label}</DockRow>
      ))}
    </DockSection>
    <DockSection>
      <DockGrip><Grip $h={6} /></DockGrip>
      <DockRow>
        <DockIcon>
          <G><text x="8" y="13" fontFamily="Liberation Sans" fontWeight="700" fontSize="14" fill={ICON}>A</text>{styledBoxes}</G>
        </DockIcon>
        Character Styles
      </DockRow>
    </DockSection>
    <DockSection>
      <DockGrip><Grip $h={6} /></DockGrip>
      <DockRow>
        <DockIcon>
          <G><text x="1" y="17" fontFamily="Liberation Sans" fontWeight="700" fontSize="17" fill={ICON}>A</text><path d="M16 1v18" {...ln(ICON)} /></G>
        </DockIcon>
        Character
      </DockRow>
    </DockSection>
  </Dock>
);

export default function App() {
  return (
    <Page>
      <Global />
      <MenuBar>
        <AppLogo>Id</AppLogo>
        <HomeSlot>
          <G w={18} h={17} vb="0 0 16 15">
            <path d="M8 0L0 8h2.500v7H6v-4.500h4V15h3.500V8H16z" />
          </G>
        </HomeSlot>
        <Menu>
          {["File", "Edit", "Layout", "Type", "Object", "Table", "View", "Window", "Help"].map((m) => (
            <span key={m}>{m}</span>
          ))}
        </Menu>
        <MenuRight>
          <G w={16} h={18}>
            <path d="M4 6H1v11h14V6h-3M8 12V1M5 4l3-3 3 3" {...ln("#6f6f6f", 1.400)} />
          </G>
          <VSep $m="0 13px 0 16px" />
          <Workspace>Advanced</Workspace>
          <G w={10} h={8}><path d="M1.500 2l3.500 3.500L8.500 2" {...ln("#d4d4d4", 1.400)} /></G>
          <VSep $m="0 9px 0 11px" />
          <StockSearch>
            <G w={17} h={12}>
              <circle cx="4.500" cy="4.500" r="3.500" {...ln("#c4c4c4")} />
              <path d="M7 7l3 4M12 4l2 2 2-2" {...ln("#c4c4c4")} />
            </G>
            Adobe Stock
          </StockSearch>
          <WinButtons>
            <WinButton $w={29} $line><G w={10} h={4}><rect y="1" width="10" height="2" /></G></WinButton>
            <WinButton $w={26} $line>
              <G w={11} h={11}><rect x=".5" y="3.500" width="7" height="7" {...ln(ICON)} /><path d="M3.500 3.500V.5h7v7H7.500" {...ln(ICON)} /></G>
            </WinButton>
            <WinButton $w={47}><G w={10} h={10}><path d="M1 1l8 8M9 1L1 9" {...ln(ICON, 1.400)} /></G></WinButton>
          </WinButtons>
        </MenuRight>
      </MenuBar>
      <Controls />
      <Body>
        <ToolStrip />
        <Canvas><BookWindow /></Canvas>
        <DockPanels />
      </Body>
    </Page>
  );
}
